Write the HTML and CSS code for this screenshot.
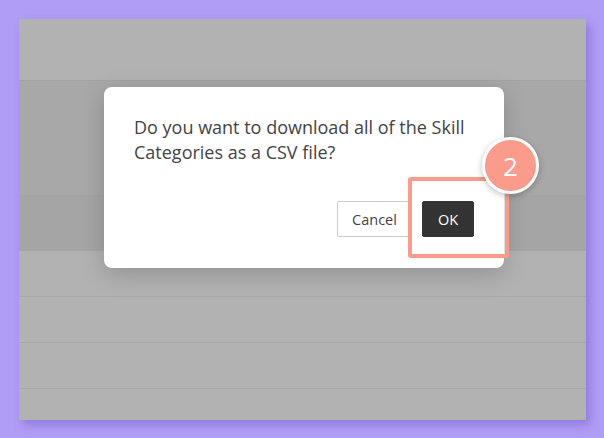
FILE: index.html
```html
<!DOCTYPE html>
<html lang="en">
<head>
    <meta charset="UTF-8">
    <meta name="viewport" content="width=device-width, initial-scale=1.0">
    <title>Export Skill Categories</title>
    <link rel="stylesheet" href="styles.css">
</head>
<body>
    <div class="shot">
        <div class="page">
            <div class="page-header"></div>
            <div class="band band-top"></div>
            <div class="band band-mid"></div>
            <div class="row"></div>
            <div class="row"></div>
            <div class="row"></div>
            <div class="row row-last"></div>
        </div>

        <!-- Confirm dialog over the dimmed page -->
        <div class="dialog">
            <p class="dialog-text">Do you want to download all of the Skill Categories as a CSV file?</p>
            <div class="dialog-actions">
                <button class="btn btn-cancel">Cancel</button>
                <button class="btn btn-ok">OK</button>
            </div>
        </div>

        <!-- Tutorial callout -->
        <div class="highlight"></div>
        <div class="step-badge">2</div>
    </div>
</body>
</html>
```

FILE: styles.css
```css
body {
    margin: 0;
    padding: 19px;
    background-color: #b09df6;
    font-family: "Open Sans", "Noto Sans", sans-serif;
}
.shot {
    position: relative;
    width: 567px;
    height: 401px;
    border-radius: 2px;
    box-shadow: 4px 5px 10px rgba(90, 60, 170, 0.35);
    overflow: hidden;
}
.page {
    display: flex;
    flex-direction: column;
    height: 100%;
    background-color: #b2b2b2;
}
.page-header {
    height: 61px;
    border-bottom: 1px solid #a2a2a2;
    background-color: #b2b2b2;
}
.band-top {
    height: 114px;
    background-color: #a8a8a8;
}
.band-mid {
    height: 56px;
    background-color: #a5a5a5;
}
.row {
    height: 45px;
    border-bottom: 1px solid #a8a8a8;
    background-color: #b2b2b2;
}
.row-last {
    flex: 1;
    border-bottom: none;
}
.dialog {
    position: absolute;
    left: 85px;
    top: 68px;
    width: 400px;
    height: 181px;
    box-sizing: border-box;
    padding: 28px 30px 31px 30px;
    background-color: #fff;
    border-radius: 8px;
    box-shadow: 0 6px 24px rgba(0, 0, 0, 0.18);
    display: flex;
    flex-direction: column;
}
.dialog-text {
    margin: 0;
    font-size: 18px;
    line-height: 25px;
    color: #444;
    max-width: 340px;
}
.dialog-actions {
    margin-top: auto;
    display: flex;
    justify-content: flex-end;
    gap: 10px;
}
.btn {
    height: 36px;
    padding: 0 12px;
    font-family: inherit;
    font-size: 14.5px;
    border-radius: 2px;
    cursor: pointer;
}
.btn-cancel {
    width: 75px;
    background-color: #fff;
    border: 1px solid #ccc;
    color: #444;
}
.btn-ok {
    width: 52px;
    background-color: #333;
    border: 1px solid #333;
    color: #fff;
}
.highlight {
    position: absolute;
    left: 389px;
    top: 158px;
    width: 101px;
    height: 81px;
    box-sizing: border-box;
    border: 4px solid #f99c8c;
    border-radius: 3px;
    box-shadow: inset 0 0 0 1px rgba(255, 255, 255, 0.7);
}
.step-badge {
    position: absolute;
    left: 463px;
    top: 118px;
    width: 57px;
    height: 57px;
    box-sizing: border-box;
    border: 3px solid #fff;
    border-radius: 50%;
    background-color: #fa9b8b;
    box-shadow: 0 2px 6px rgba(0, 0, 0, 0.25);
    color: #fff;
    font-size: 26px;
    display: flex;
    align-items: center;
    justify-content: center;
}
```
